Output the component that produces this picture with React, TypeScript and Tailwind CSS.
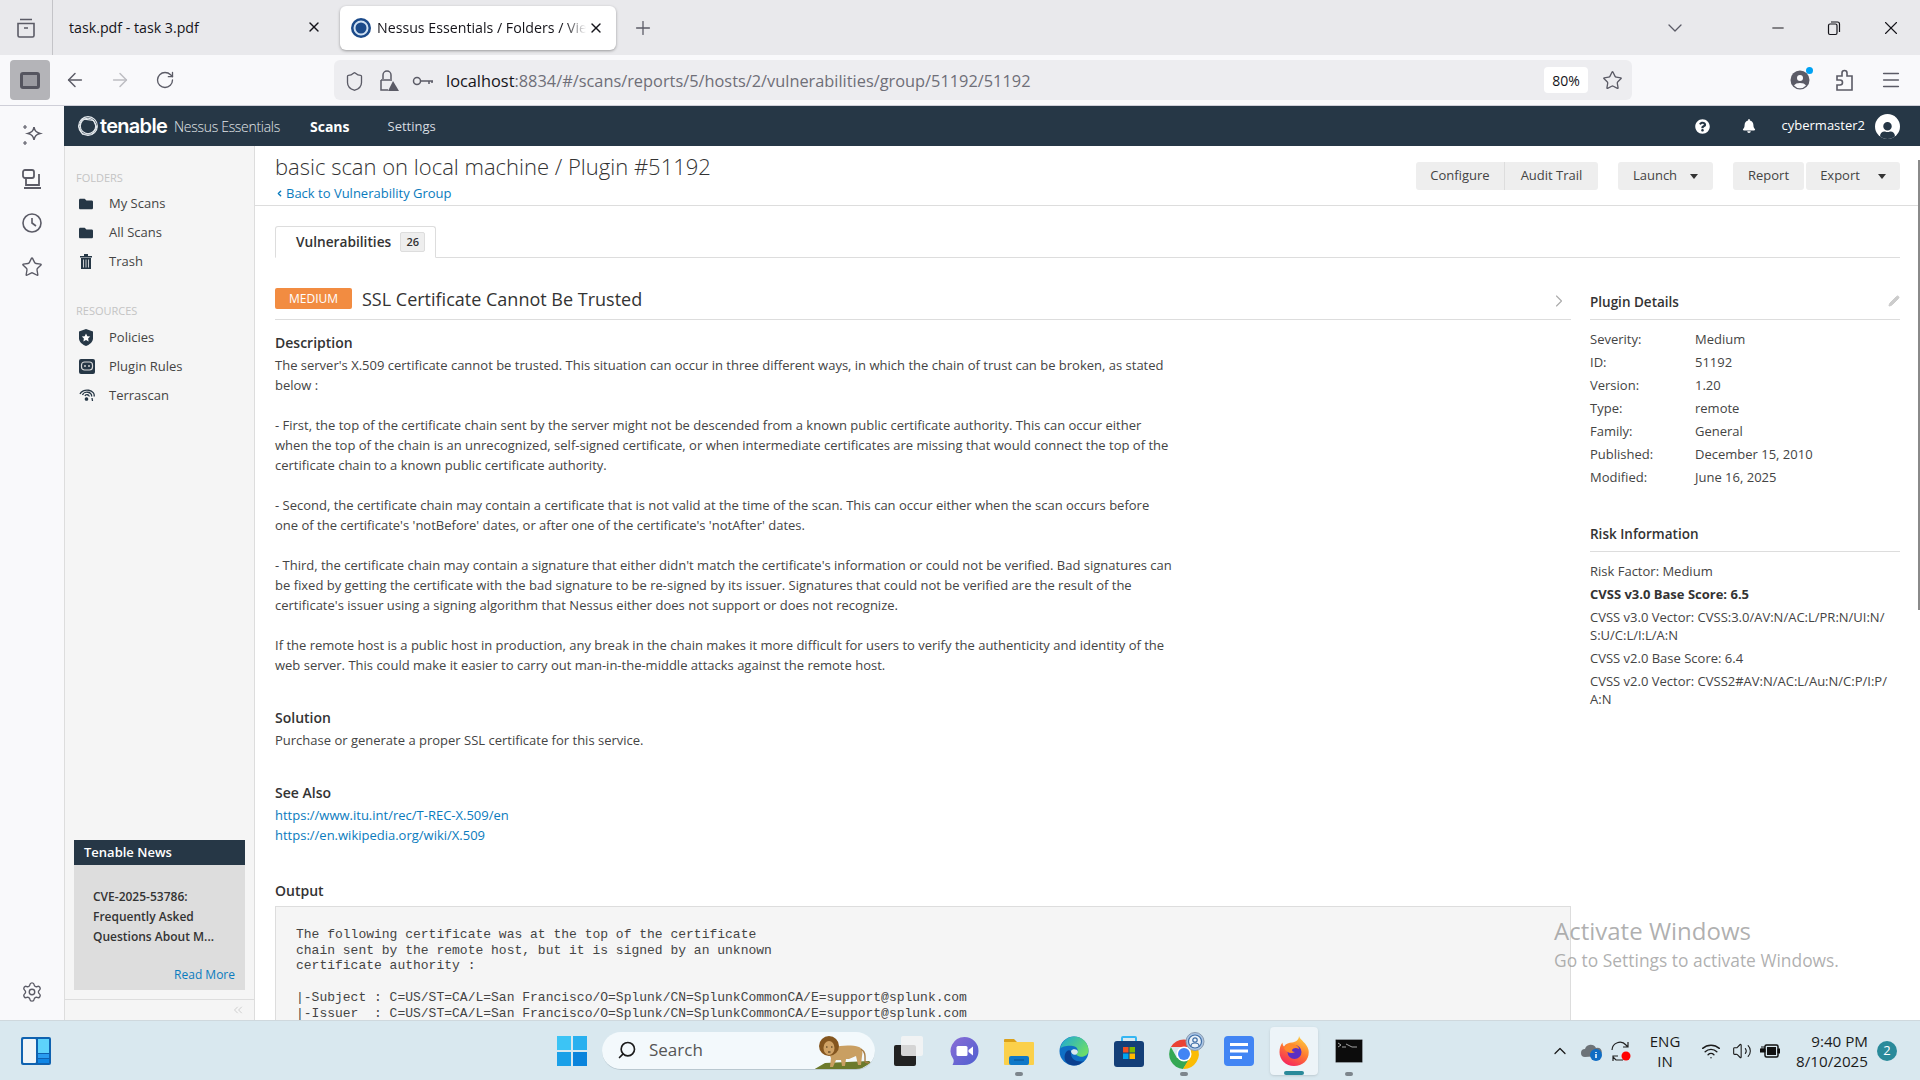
import {
  ArrowLeft,
  ArrowRight,
  ChevronDown,
  ChevronLeft,
  ChevronRight,
  ChevronUp,
  ChevronsLeft,
  Menu,
  Minus,
  Pencil,
  Plus,
  RotateCw,
  Search,
  Settings,
  Shield,
  Star,
  Volume2,
  Wifi,
  X,
} from 'lucide-react';
import { FaBell, FaFolder, FaQuestionCircle, FaUser } from 'react-icons/fa';

const description = `The server's X.509 certificate cannot be trusted. This situation can occur in three different ways, in which the chain of trust can be broken, as stated below :

- First, the top of the certificate chain sent by the server might not be descended from a known public certificate authority. This can occur either when the top of the chain is an unrecognized, self-signed certificate, or when intermediate certificates are missing that would connect the top of the certificate chain to a known public certificate authority.

- Second, the certificate chain may contain a certificate that is not valid at the time of the scan. This can occur either when the scan occurs before one of the certificate's 'notBefore' dates, or after one of the certificate's 'notAfter' dates.

- Third, the certificate chain may contain a signature that either didn't match the certificate's information or could not be verified. Bad signatures can be fixed by getting the certificate with the bad signature to be re-signed by its issuer. Signatures that could not be verified are the result of the certificate's issuer using a signing algorithm that Nessus either does not support or does not recognize.

If the remote host is a public host in production, any break in the chain makes it more difficult for users to verify the authenticity and identity of the web server. This could make it easier to carry out man-in-the-middle attacks against the remote host.`;

const output = `The following certificate was at the top of the certificate
chain sent by the remote host, but it is signed by an unknown
certificate authority :

|-Subject : C=US/ST=CA/L=San Francisco/O=Splunk/CN=SplunkCommonCA/E=support@splunk.com
|-Issuer  : C=US/ST=CA/L=San Francisco/O=Splunk/CN=SplunkCommonCA/E=support@splunk.com`;

const details = [
  ['Severity:', 'Medium'],
  ['ID:', '51192'],
  ['Version:', '1.20'],
  ['Type:', 'remote'],
  ['Family:', 'General'],
  ['Published:', 'December 15, 2010'],
  ['Modified:', 'June 16, 2025'],
];

function TabStrip() {
  return (
    <div className="h-[55px] shrink-0 bg-[#e9e9ec] flex items-center text-[#15141a] text-[14.2px]">
      <div className="w-[53px] h-full flex items-center justify-center border-r border-[#c4c4c8]">
        <svg width="22" height="22" viewBox="0 0 22 22" fill="none" stroke="#5b5b66" strokeWidth="1.6">
          <path d="M5 2.5h12M3 6.500h16v12a1.500 1.500 0 0 1-1.500 1.500h-13A1.500 1.500 0 0 1 3 18.500zM9 11h4" />
        </svg>
      </div>
      <div className="w-[287px] flex items-center pl-4 pr-[18px] justify-between">
        <span>task.pdf - task 3.pdf</span>
        <X size={16} strokeWidth={2} />
      </div>
      <div className="w-[276px] h-[44px] bg-white rounded-md shadow-[0_1px_3px_rgba(0,0,0,0.35)] flex items-center pl-[10px] pr-[12px]">
        <svg width="22" height="22" viewBox="0 0 22 22" className="shrink-0">
          <circle cx="11" cy="11" r="10" fill="#1b4a8a" />
          <circle cx="11" cy="11" r="6.500" fill="none" stroke="#cfe0f2" strokeWidth="2" />
        </svg>
        <span className="ml-[5px] w-[209px] overflow-hidden whitespace-nowrap [mask-image:linear-gradient(to_right,black_90%,transparent)]">
          Nessus Essentials / Folders / View
        </span>
        <X size={16} strokeWidth={2} className="ml-auto" />
      </div>
      <Plus size={22} strokeWidth={1.4} className="ml-4 text-[#5b5b66]" />
      <div className="ml-auto flex items-center">
        <ChevronDown size={24} strokeWidth={1.3} className="text-[#5b5b66] mr-[82px]" />
        <Minus size={18} strokeWidth={1.3} className="mr-[39px]" />
        <svg width="16" height="16" viewBox="0 0 16 16" fill="none" stroke="#15141a" strokeWidth="1.200" className="mr-[38px]">
          <rect x="2.500" y="4" width="8.500" height="10.500" rx="1.500" />
          <path d="M5 2h6.500A2 2 0 0 1 13.500 4v8" />
        </svg>
        <X size={22} strokeWidth={1.2} className="mr-[18px]" />
      </div>
    </div>
  );
}

function Toolbar() {
  return (
    <div className="h-[51px] shrink-0 bg-[#f9f9fb] border-b border-[#cfcfd8] flex items-center text-[#5b5b66]">
      <div className="ml-[10px] w-[40px] h-[40px] rounded bg-[#b4b4b8] flex items-center justify-center">
        <div className="w-[20px] h-[17px] rounded-[3px] border-[3px] border-[#55555f] bg-[#9a9aa0]" />
      </div>
      <ArrowLeft size={22} strokeWidth={1.6} className="ml-[14px]" />
      <ArrowRight size={22} strokeWidth={1.6} className="ml-[23px] text-[#bdbdc2]" />
      <RotateCw size={20} strokeWidth={1.6} className="ml-[24px]" />
      <div className="ml-[159px] w-[1298px] h-[40px] rounded-md bg-[#ededf0] flex items-center">
        <Shield size={21} strokeWidth={1.5} className="ml-[10px] mt-[2px]" />
        <svg width="22" height="24" viewBox="0 0 22 24" className="ml-[13px] mt-[2px]" fill="none" stroke="#5b5b66" strokeWidth="1.500">
          <path d="M5 10V6a4 4 0 0 1 8 0v4M3 11h11M3 11v10h7" />
          <path d="M15 12l6 10H10z" fill="#5b5b66" stroke="none" />
        </svg>
        <svg width="22" height="12" viewBox="0 0 22 12" className="ml-[12px] mt-[2px]" fill="none" stroke="#5b5b66" strokeWidth="1.500">
          <circle cx="5" cy="6" r="3.500" />
          <path d="M9 6h12M17 6v3M20 6v2" />
        </svg>
        <span className="ml-[12px] mt-[2px] text-[16.35px] text-[#15141a] whitespace-nowrap">
          localhost<span className="text-[#6f6f78]">:8834/#/scans/reports/5/hosts/2/vulnerabilities/group/51192/51192</span>
        </span>
        <div className="ml-auto w-[44px] h-[26px] bg-white rounded flex items-center justify-center text-[14px] text-[#15141a]">80%</div>
        <Star size={21} strokeWidth={1.5} className="ml-[14px] mr-[9px]" />
      </div>
      <div className="ml-auto flex items-center gap-[25px] mr-[18px]">
        <div className="relative">
          <svg width="20" height="20" viewBox="0 0 20 20">
            <circle cx="10" cy="10" r="9.500" fill="#5b5b66" />
            <circle cx="10" cy="8" r="3" fill="#f9f9fb" />
            <path d="M4 15.500a6.500 4 0 0 1 12 0 8 8 0 0 1-12 0z" fill="#f9f9fb" />
          </svg>
          <div className="absolute -top-[3px] -right-[3px] w-[7px] h-[7px] rounded-full bg-[#00a2f3]" />
        </div>
        <svg width="20" height="22" viewBox="0 0 20 22" fill="none" stroke="#5b5b66" strokeWidth="1.600">
          <path d="M2 7h5V4a2.500 2.500 0 0 1 5 0v3h5v14H2v-5h3a2.500 2.500 0 0 0 0-5H2z" />
        </svg>
        <Menu size={22} strokeWidth={1.7} />
      </div>
    </div>
  );
}

function RailIcons() {
  return (
    <div className="w-[64px] shrink-0 bg-[#f9f9fb] flex flex-col items-center text-[#5b5b66] pt-[18px]">
      <svg width="22" height="22" viewBox="0 0 22 22" fill="none" stroke="#5b5b66" strokeWidth="1.600">
        <path d="M13 3c.6 4 2 5.400 6 6.500-4 1.100-5.400 2.500-6 6.500-.6-4-2-5.400-6-6.500 4-1.100 5.400-2.500 6-6.500z" />
        <path d="M4 1v4M2 3h4M4 17v4M2 19h4" strokeWidth="1.200" />
      </svg>
      <svg width="22" height="22" viewBox="0 0 22 22" fill="none" stroke="#5b5b66" strokeWidth="1.800" className="mt-[22px]">
        <rect x="2" y="2" width="11" height="8" rx="2" />
        <path d="M18 6v11H5v-7M3 20h17" />
      </svg>
      <svg width="22" height="22" viewBox="0 0 22 22" fill="none" stroke="#5b5b66" strokeWidth="1.600" className="mt-[22px]">
        <circle cx="11" cy="11" r="9" />
        <path d="M11 6v5l4 3" />
      </svg>
      <Star size={22} strokeWidth={1.5} className="mt-[22px]" />
      <Settings size={22} strokeWidth={1.5} className="mt-auto mb-[17px]" />
    </div>
  );
}

function SideLink({ icon, label }: { icon: React.ReactNode; label: string }) {
  return (
    <div className="h-[29px] flex items-center text-[13px] text-[#444] pl-[3px]">
      <div className="w-[30px] flex justify-start text-[#263746]">{icon}</div>
      <span>{label}</span>
    </div>
  );
}

function Sidebar() {
  return (
    <aside className="w-[191px] shrink-0 bg-[#f5f5f5] border-x border-[#ddd] flex flex-col">
      <div className="pl-[11px] pr-2 pt-[24px]">
        <div className="text-[11px] text-[#c4c4c4] h-[16px] leading-[16px]">FOLDERS</div>
        <div className="mt-[3px]">
          <SideLink icon={<FaFolder size={14} />} label="My Scans" />
          <SideLink icon={<FaFolder size={14} />} label="All Scans" />
          <SideLink
            icon={
              <svg width="12" height="15" viewBox="0 0 12 15" className="ml-[1px]">
                <path d="M0 2h12v1.500H0zM4 0h4v2H4zM1 4h10v11H1z" fill="#263746" />
                <path d="M3.500 5.500v8M6 5.500v8M8.500 5.500v8" stroke="#f5f5f5" strokeWidth="0.800" />
              </svg>
            }
            label="Trash"
          />
        </div>
        <div className="text-[11px] text-[#c4c4c4] h-[16px] leading-[16px] mt-[27px]">RESOURCES</div>
        <div className="mt-[4px]">
          <SideLink
            icon={
              <svg width="14" height="17" viewBox="0 0 14 17">
                <path d="M7 0l7 2.500v7C14 13 10 16 7 17 4 16 0 13 0 9.500v-7z" fill="#263746" />
                <path d="M7 4.500l1.300 2.700 2.900.4-2.100 2 .5 2.900L7 11.100l-2.600 1.400.5-2.900-2.100-2 2.900-.4z" fill="#fff" />
              </svg>
            }
            label="Policies"
          />
          <SideLink
            icon={
              <svg width="16" height="15" viewBox="0 0 16 15">
                <rect width="16" height="15" rx="2" fill="#263746" />
                <rect x="2.500" y="3" width="11" height="8" rx="3" fill="none" stroke="#d9d9d9" strokeWidth="1.200" />
                <path d="M6 6v2M10 6v2" stroke="#d9d9d9" strokeWidth="1.400" />
              </svg>
            }
            label="Plugin Rules"
          />
          <SideLink
            icon={
              <svg width="16" height="15" viewBox="0 0 16 15" fill="none" stroke="#263746" strokeWidth="1.300">
                <path d="M1 6a7 5 0 0 1 14 2.500M3.500 7a4.500 3.500 0 0 1 9 1.500M6 8a2 1.500 0 0 1 4 .5M13 10l.5 3" />
                <circle cx="7.500" cy="11" r="1.200" fill="#263746" />
              </svg>
            }
            label="Terrascan"
          />
        </div>
      </div>
      <div className="mt-auto mx-[9px] mb-[9px]">
        <div className="h-[25px] bg-[#263746] text-white text-[13px] font-semibold leading-[25px] px-[10px]">Tenable News</div>
        <div className="h-[125px] bg-[#ddd] px-[19px] pt-[22px] relative">
          <p className="text-[12px] font-semibold text-[#333] leading-[20px]">
            CVE-2025-53786:
            <br />
            Frequently Asked
            <br />
            Questions About M...
          </p>
          <span className="absolute right-[10px] bottom-[6px] text-[12px] text-[#0a7bbd]">Read More</span>
        </div>
      </div>
      <div className="h-[21px] border-t border-[#ddd] flex justify-end items-center pr-[9px] text-[#c8c8c8]">
        <ChevronsLeft size={14} strokeWidth={1.500} />
      </div>
    </aside>
  );
}

function ActionButton({ label, caret, className }: { label: string; caret?: string; className: string }) {
  return (
    <div className={`h-[28px] bg-[#eee] flex items-center justify-center text-[13px] text-[#444] ${className}`}>
      <span>{label}</span>
      {caret && <div className={`${caret} w-0 h-0 border-x-[4.500px] border-x-transparent border-t-[5px] border-t-[#333]`} />}
    </div>
  );
}

function Heading({ children, className }: { children: React.ReactNode; className?: string }) {
  return <h3 className={`font-semibold text-[#333] leading-[20px] ${className ?? 'text-[14px]'}`}>{children}</h3>;
}

function Main() {
  return (
    <main className="flex-1 min-w-0 bg-white">
      <div className="h-[60px] border-b border-[#ddd] pl-[20px] pr-[20px] flex justify-between">
        <div>
          <div className="text-[22px] font-light text-[#333] leading-[32px] mt-[4px]">basic scan on local machine / Plugin #51192</div>
          <div className="text-[13px] text-[#0a7bbd] leading-[18px] mt-[2px] flex items-center">
            <ChevronLeft size={9} strokeWidth={4} className="mr-[2px]" />
            Back to Vulnerability Group
          </div>
        </div>
        <div className="flex pt-[16px]">
          <ActionButton label="Configure" className="w-[89px] rounded-l-[3px] border-r border-[#ddd]" />
          <ActionButton label="Audit Trail" className="w-[93px] rounded-r-[3px]" />
          <ActionButton label="Launch" caret="ml-[13px]" className="w-[95px] rounded-[3px] ml-[20px]" />
          <ActionButton label="Report" className="w-[71px] rounded-[3px] ml-[20px]" />
          <ActionButton label="Export" caret="ml-[18px]" className="w-[94px] rounded-[3px] ml-[2px]" />
        </div>
      </div>

      <div className="pl-[20px] pr-[20px]">
        <div className="mt-[20px] h-[32px] border-b border-[#ddd]">
          <div className="w-[161px] h-[32px] border border-b-white border-[#ddd] rounded-t-[3px] bg-white flex items-center pl-[20px]">
            <span className="text-[13.7px] font-semibold text-[#333]">Vulnerabilities</span>
            <span className="ml-[9px] w-[25px] h-[20px] bg-[#eee] border border-[#ddd] rounded-[2px] text-[11px] font-semibold text-[#333] flex items-center justify-center">26</span>
          </div>
        </div>

        <div className="flex gap-[19px] mt-[30px]">
          <div className="w-[1296px] shrink-0">
            <div className="h-[32px] border-b border-[#ddd] flex items-start relative">
              <div className="w-[77px] h-[21px] rounded-[2px] bg-[#f28c41] text-white text-[12px] flex items-center justify-center">MEDIUM</div>
              <div className="ml-[10px] text-[18px] text-[#333] leading-[22px]">SSL Certificate Cannot Be Trusted</div>
              <ChevronRight size={20} strokeWidth={1.300} className="absolute right-[2px] top-[3px] text-[#aaa]" />
            </div>

            <Heading className="text-[14px] mt-[13px]">Description</Heading>
            <p className="mt-[2px] w-[898px] text-[13px] leading-[20px] text-[#444] whitespace-pre-line">{description}</p>

            <Heading className="text-[14px] mt-[33px]">Solution</Heading>
            <p className="mt-[2px] text-[13px] leading-[20px] text-[#444]">Purchase or generate a proper SSL certificate for this service.</p>

            <Heading className="text-[14px] mt-[33px]">See Also</Heading>
            <div className="mt-[2px] text-[13px] leading-[20px] text-[#0a7bbd]">
              <div>https://www.itu.int/rec/T-REC-X.509/en</div>
              <div>https://en.wikipedia.org/wiki/X.509</div>
            </div>

            <Heading className="text-[14px] mt-[36px]">Output</Heading>
            <pre className="mt-[5px] h-[300px] bg-[#f5f5f5] border border-[#ddd] pl-[20px] pt-[20px] font-['Liberation_Mono',monospace] text-[13px] leading-[15.700px] text-[#444]">
              {output}
            </pre>
          </div>

          <div className="w-[310px] shrink-0">
            <div className="h-[32px] border-b border-[#ddd] flex items-start justify-between pt-[4px]">
              <Heading className="text-[13.5px]">Plugin Details</Heading>
              <Pencil size={12} className="mt-[3px] text-[#ccc]" fill="#ccc" />
            </div>
            <div className="mt-[8px] text-[13px] text-[#444]">
              {details.map(([k, v]) => (
                <div key={k} className="h-[23px] leading-[23px] flex">
                  <span className="w-[105px]">{k}</span>
                  <span>{v}</span>
                </div>
              ))}
            </div>
            <div className="mt-[35px] h-[28px] border-b border-[#ddd]">
              <Heading className="text-[13.5px]">Risk Information</Heading>
            </div>
            <div className="mt-[10px] text-[13px] text-[#444] leading-[18px] flex flex-col gap-[5px]">
              <div>Risk Factor: Medium</div>
              <div className="font-bold text-[#333]">CVSS v3.0 Base Score: 6.5</div>
              <div>
                CVSS v3.0 Vector: CVSS:3.0/AV:N/AC:L/PR:N/UI:N/
                <br />
                S:U/C:L/I:L/A:N
              </div>
              <div>CVSS v2.0 Base Score: 6.4</div>
              <div>
                CVSS v2.0 Vector: CVSS2#AV:N/AC:L/Au:N/C:P/I:P/
                <br />
                A:N
              </div>
            </div>
          </div>
        </div>
      </div>
    </main>
  );
}

function NavBar() {
  return (
    <div className="h-[40px] shrink-0 bg-[#263746] flex items-center text-white">
      <div className="ml-[13px] w-[233px] flex items-center">
        <svg width="22" height="22" viewBox="0 0 20 20" fill="none" stroke="#e6ebef" strokeWidth="1">
          <circle cx="10" cy="10" r="8.500" />
          <path d="M5 3.500l10 1.500 3 6-4 6-9 .500-3.500-7z" />
          <circle cx="10" cy="10" r="7" />
        </svg>
        <span className="ml-[1px] font-['Inter',sans-serif] text-[20px] font-semibold tracking-[-0.7px] leading-none">tenable</span>
        <span className="ml-[7px] text-[14px] font-light text-[#e3e7ea] tracking-[-0.3px] whitespace-nowrap">Nessus Essentials</span>
      </div>
      <span className="text-[14px] font-bold">Scans</span>
      <span className="ml-[38px] mt-[2px] text-[13px] text-[#d5dbe0]">Settings</span>
      <div className="ml-auto flex items-center mr-[20px]">
        <FaQuestionCircle size={15} />
        <FaBell size={14} className="ml-[32px]" />
        <span className="ml-[26px] text-[13px]">cybermaster2</span>
        <div className="ml-[10px] w-[25px] h-[25px] rounded-full bg-white flex items-end justify-center overflow-hidden text-[#263746]">
          <FaUser size={17} />
        </div>
      </div>
    </div>
  );
}

function TaskIcon({ children, active, dot }: { children: React.ReactNode; active?: boolean; dot?: boolean }) {
  return (
    <div className={`w-[48px] h-[48px] mx-[3.500px] rounded flex items-center justify-center relative ${active ? 'bg-[#edf4f8] shadow-sm' : ''}`}>
      {children}
      {dot && <div className="absolute -bottom-[1px] w-[8px] h-[4px] rounded-full bg-[#7d858c]" />}
      {active && <div className="absolute bottom-0 w-[20px] h-[4px] rounded-full bg-[#2a8a9a]" />}
    </div>
  );
}

function Taskbar() {
  return (
    <div className="h-[60px] shrink-0 bg-[#d9e8ef] border-t border-[#cfd8dd] flex items-center text-[#1b1b1b]">
      <svg width="30" height="28" viewBox="0 0 30 28" className="ml-[21px]">
        <rect width="30" height="28" rx="2" fill="#0f62b0" />
        <rect x="2" y="2" width="13" height="24" rx="1" fill="#eef4f8" />
        <rect x="17" y="2" width="11" height="14" fill="#5ed3fb" />
        <rect x="17" y="17" width="11" height="4" fill="#2a9df0" />
        <rect x="17" y="22" width="11" height="4" fill="#0f86e6" />
      </svg>

      <div className="ml-[506px] flex items-center">
        <svg width="30" height="30" viewBox="0 0 30 30">
          <rect width="14" height="14" fill="#3cc4f5" />
          <rect x="16" width="14" height="14" fill="#29b0ef" />
          <rect y="16" width="14" height="14" fill="#1aa0e8" />
          <rect x="16" y="16" width="14" height="14" fill="#0a84dc" />
        </svg>
        <div className="ml-[15px] w-[273px] h-[38px] rounded-full bg-[#f3f9fc] border-b border-[#b9c8d0] flex items-center pl-[15px] relative overflow-hidden">
          <Search size={20} strokeWidth={2} className="-scale-x-100" />
          <span className="ml-[12px] text-[17px] text-[#555]">Search</span>
          <svg width="58" height="34" viewBox="0 0 58 34" className="absolute right-[4px] top-[4px]">
            <path d="M0 34l12-7 44-2c2 1 2 2 0 3l-10 6z" fill="#6c7a2c" />
            <path d="M20 12c8-3 19-3 26-1 3 1 4 4 3 9l-1 9h-3l-2-9-7 3-3 0-1 7h-3l-1-6-5 0-3 7h-3l1-9c-1-2-3-6 2-10z" fill="#c99f62" />
            <circle cx="16" cy="10" r="10" fill="#84561f" />
            <ellipse cx="16" cy="12" rx="5.500" ry="7" fill="#cfa265" />
            <path d="M48 13c5 3 4 8 4 13M52 26l4 1" fill="none" stroke="#a67c44" strokeWidth="1.400" />
            <path d="M13 11h1.500M18 11h1.500M15 16h2.500" stroke="#3b2a12" strokeWidth="1" />
          </svg>
        </div>
        <div className="ml-[6px] flex items-center">
          <TaskIcon>
            <svg width="30" height="30" viewBox="0 0 30 30">
              <rect x="0" y="9" width="22" height="21" rx="2" fill="#222" />
              <rect x="7" y="0" width="22" height="20" rx="2" fill="#f4f4f4" fillOpacity="0.850" />
            </svg>
          </TaskIcon>
          <TaskIcon>
            <svg width="30" height="30" viewBox="0 0 30 30">
              <defs>
                <linearGradient id="meetBg" x1="0" y1="0" x2="1" y2="1">
                  <stop offset="0" stopColor="#8a6dd6" />
                  <stop offset="1" stopColor="#4f5fd0" />
                </linearGradient>
              </defs>
              <path d="M15.500 1a14 14 0 0 1 0 28H3.500c1-1.500 1.500-3.500 1-5.500A14 14 0 0 1 15.500 1z" fill="url(#meetBg)" />
              <rect x="7.500" y="10" width="11" height="10" rx="1.500" fill="#fff" />
              <path d="M19.500 14l4.500-3.500v9l-4.500-3.500z" fill="#fff" />
            </svg>
          </TaskIcon>
          <TaskIcon dot>
            <svg width="30" height="28" viewBox="0 0 30 28">
              <path d="M0 3a1 1 0 0 1 1-1h9l3 3h-13z" fill="#dba11a" />
              <rect y="5" width="30" height="23" rx="1" fill="#fbd04a" />
              <rect x="5" y="19" width="20" height="9" rx="2" fill="#0f78c8" />
              <path d="M10 23h10" stroke="#0a4f8c" strokeWidth="1" />
            </svg>
          </TaskIcon>
          <TaskIcon>
            <svg width="30" height="30" viewBox="0 0 30 30">
              <defs>
                <linearGradient id="edgeTop" x1="0" y1="0" x2="1" y2="0.600">
                  <stop offset="0" stopColor="#1aa7d8" />
                  <stop offset="1" stopColor="#6bdc6b" />
                </linearGradient>
              </defs>
              <circle cx="15" cy="15" r="14.500" fill="#0f6fc5" />
              <path d="M1 13C3 4 10 .5 15 .5c8 0 14.500 6 14.500 14 0 5-5 7-9 6-2-.5-3-1.500-3.500-2 3-2 2.500-8-3-8.500C9 9.500 3 10 1 13z" fill="url(#edgeTop)" />
              <path d="M12 17c-.5 5 4 8.500 10 8.500 1.500 0 2.500-.5 3-1-2.500 3-6 5-10 5C12 29.500 9 28 7 26c-2-3-2-8 1-11 2-1.500 4-1 4 2z" fill="#0b3f8f" />
              <path d="M12 15c1-2 4-2.500 6-1 1.500 1.500 1 3.500-1 4.500-2 1-5-.5-5-3.500z" fill="#d9e8ef" />
            </svg>
          </TaskIcon>
          <TaskIcon>
            <svg width="30" height="32" viewBox="0 0 30 32">
              <path d="M8 7V3a1 1 0 0 1 1-1h12a1 1 0 0 1 1 1v4" fill="none" stroke="#35b6f2" strokeWidth="2" />
              <rect y="6" width="30" height="26" rx="3" fill="#143f78" />
              <rect x="9" y="12" width="5.500" height="5.500" fill="#f25022" />
              <rect x="15.500" y="12" width="5.500" height="5.500" fill="#7fba00" />
              <rect x="9" y="18.500" width="5.500" height="5.500" fill="#00a4ef" />
              <rect x="15.500" y="18.500" width="5.500" height="5.500" fill="#ffb900" />
            </svg>
          </TaskIcon>
          <TaskIcon dot>
            <svg width="38" height="38" viewBox="0 0 38 38" className="ml-[4px]">
              <path d="M3.900 15A15 15 0 0 1 30 15H17z" fill="#ea4335" />
              <path d="M3.900 15A15 15 0 0 0 16 37l6-9-12-2z" fill="#34a853" />
              <path d="M30 15A15 15 0 0 1 16 37l6.500-11 2-11z" fill="#fbbc05" />
              <circle cx="17" cy="22" r="7.500" fill="#fff" />
              <circle cx="17" cy="22" r="6" fill="#4285f4" />
              <circle cx="28" cy="9.500" r="9" fill="#a9c4e4" stroke="#8a9bb0" strokeWidth="1" />
              <circle cx="28" cy="9.500" r="6.500" fill="#eaf1f8" stroke="#3f6ea6" strokeWidth="1.200" />
              <circle cx="28" cy="8" r="2.200" fill="none" stroke="#3f6ea6" strokeWidth="1.200" />
              <path d="M24 14a4 3 0 0 1 8 0" fill="none" stroke="#3f6ea6" strokeWidth="1.200" />
            </svg>
          </TaskIcon>
          <TaskIcon>
            <svg width="30" height="30" viewBox="0 0 30 30">
              <rect width="30" height="30" rx="4" fill="#4285f4" />
              <rect x="6" y="7" width="18" height="3" fill="#fff" />
              <rect x="6" y="13.500" width="18" height="3" fill="#fff" />
              <rect x="6" y="20" width="12" height="3" fill="#fff" />
            </svg>
          </TaskIcon>
          <TaskIcon active>
            <svg width="30" height="30" viewBox="0 0 30 30">
              <defs>
                <linearGradient id="foxBody" x1="0.800" y1="0" x2="0.300" y2="1">
                  <stop offset="0" stopColor="#ffd23f" />
                  <stop offset="0.500" stopColor="#ff7a30" />
                  <stop offset="1" stopColor="#f5245e" />
                </linearGradient>
              </defs>
              <path d="M20 0c1 4 8 7 9.500 14 1.500 9-5 16-14.500 16C7 30 .5 24 .5 16c0-4 1-7 3-9.500 0 2 .5 3 1.500 4 2-3 5-4 8-4 4-.5 7-3 7-6.500z" fill="url(#foxBody)" />
              <circle cx="15.500" cy="16" r="7" fill="#5b2fc4" />
              <path d="M5 12c3-4 8-5 12-3 2 1 3 3 3 4-3-2-6-1-7 1 0 1 1 2 3 2-3 2-9 1-11-4z" fill="#ff8a2c" />
            </svg>
          </TaskIcon>
          <TaskIcon dot>
            <svg width="28" height="24" viewBox="0 0 28 24">
              <rect x="0.500" y="0.500" width="27" height="23" rx="1" fill="#0c0c0c" stroke="#8f979c" strokeWidth="1" />
              <path d="M3 4l3 2-3 2M7 8h4M11 5l6 3h5" fill="none" stroke="#c9c9c9" strokeWidth="0.800" />
            </svg>
          </TaskIcon>
        </div>
      </div>

      <div className="ml-auto flex items-center mr-[23px]">
        <ChevronUp size={20} strokeWidth={1.500} />
        <svg width="22" height="20" viewBox="0 0 22 20" className="ml-[11px]">
          <path d="M4 16a4 4 0 0 1 0-8 6 6 0 0 1 11-1 4 4 0 0 1 3 8z" fill="#6d7378" />
          <circle cx="15" cy="14" r="6" fill="#0f6cc4" />
          <path d="M15 11v1M15 13v4" stroke="#fff" strokeWidth="1.500" />
        </svg>
        <svg width="22" height="22" viewBox="0 0 22 22" className="ml-[7px]" fill="none" stroke="#222" strokeWidth="1.200">
          <path d="M2 10a8 8 0 0 1 14-5l2 2M18 2v5h-5M13 20H6l-3-3M3 21v-5h5" />
          <circle cx="16" cy="16" r="4.500" fill="#f00" stroke="none" />
        </svg>
        <div className="ml-[17px] w-[32px] text-center text-[15px] leading-[20px]">
          ENG
          <br />
          IN
        </div>
        <Wifi size={20} strokeWidth={1.700} className="ml-[20px]" />
        <Volume2 size={20} strokeWidth={1.300} className="ml-[11px]" />
        <svg width="20" height="16" viewBox="0 0 20 16" className="ml-[8px]">
          <rect x="5" y="2" width="13" height="12" rx="1.500" fill="none" stroke="#111" strokeWidth="1.500" />
          <rect x="7" y="4" width="9" height="8" fill="#111" />
          <path d="M18 6h2v4h-2zM0 6h5v3H0zM2 3v3M4 3v3" fill="#111" stroke="#111" strokeWidth="1" />
        </svg>
        <div className="ml-[16px] text-right text-[15.2px] leading-[20px]">
          9:40 PM
          <br />
          8/10/2025
        </div>
        <div className="ml-[9px] w-[20px] h-[20px] rounded-full bg-[#2a8a9a] text-white text-[13px] flex items-center justify-center">2</div>
      </div>
    </div>
  );
}

export default function App() {
  return (
    <div className="w-[1920px] h-[1080px] flex flex-col overflow-hidden relative font-['Open_Sans',sans-serif]">
      <TabStrip />
      <Toolbar />
      <div className="flex-1 min-h-0 flex overflow-hidden">
        <RailIcons />
        <div className="flex-1 min-w-0 flex flex-col">
          <NavBar />
          <div className="flex-1 min-h-0 flex overflow-hidden">
            <Sidebar />
            <Main />
          </div>
        </div>
      </div>
      <Taskbar />
      <div className="absolute left-[1554px] top-[914px] pointer-events-none text-[#8d8d8d]/70">
        <div className="text-[24px] leading-[34px]">Activate Windows</div>
        <div className="text-[17.4px] leading-[24px]">Go to Settings to activate Windows.</div>
      </div>
      <div className="absolute right-0 top-[160px] w-[2px] h-[450px] bg-[#8a8a8a]" />
    </div>
  );
}
